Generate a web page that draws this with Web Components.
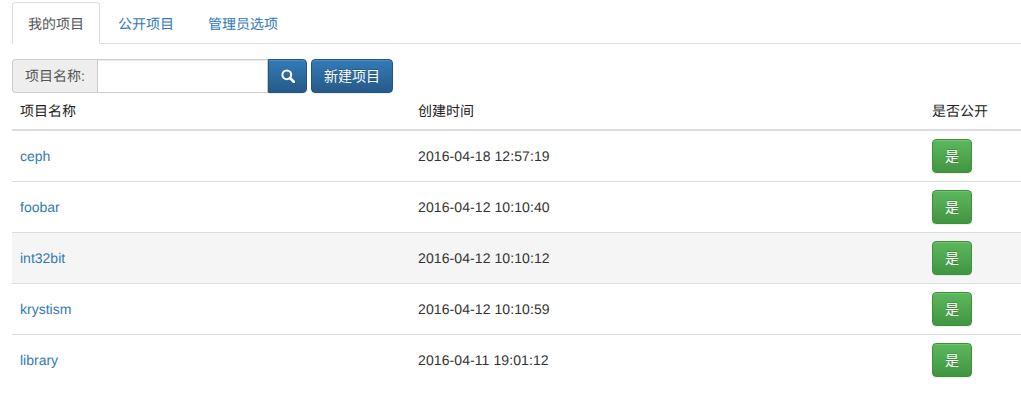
<!DOCTYPE html>
<html>
<head>
<meta charset="utf-8">
<title>项目</title>
<style>
  html, body { margin: 0; padding: 0; background: #fff; overflow: hidden; }
  body {
    padding: 2px 0 0 12px;
    font: 14px/20px "Liberation Sans", "Noto Sans CJK SC", sans-serif;
    color: #333;
    text-rendering: geometricPrecision;
  }
</style>
</head>
<body>
<project-tabs active="0" items="我的项目,公开项目,管理员选项"></project-tabs>
<search-bar label="项目名称:" action="新建项目"></search-bar>
<project-table>
  <project-row name="ceph" time="2016-04-18 12:57:19"></project-row>
  <project-row name="foobar" time="2016-04-12 10:10:40"></project-row>
  <project-row name="int32bit" time="2016-04-12 10:10:12" shaded></project-row>
  <project-row name="krystism" time="2016-04-12 10:10:59"></project-row>
  <project-row name="library" time="2016-04-11 19:01:12"></project-row>
</project-table>

<script>
class ProjectTabs extends HTMLElement {
  constructor() {
    super();
    this.attachShadow({ mode: 'open' });
  }

  connectedCallback() {
    const active = Number(this.getAttribute('active') || 0);
    const items = (this.getAttribute('items') || '').split(',');
    const tabs = items.map((item, i) =>
      `<a href="#" class="${i === active ? 'on' : ''}">${item}</a>`).join('');
    this.shadowRoot.innerHTML = `
      <style>
        :host { display: flex; height: 41px; border-bottom: 1px solid #ddd; }
        a {
          display: block;
          height: 41px;
          box-sizing: border-box;
          margin-right: 2px;
          padding: 11px 15px 9px;
          border: 1px solid transparent;
          border-radius: 4px 4px 0 0;
          color: #337ab7;
          text-decoration: none;
        }
        a.on {
          height: 42px;
          color: #555;
          background: #fff;
          border-color: #ddd #ddd #fff;
        }
      </style>
      ${tabs}
    `;
  }
}

class SearchBar extends HTMLElement {
  constructor() {
    super();
    this.attachShadow({ mode: 'open' });
  }

  connectedCallback() {
    const label = this.getAttribute('label') || '';
    const action = this.getAttribute('action') || '';
    this.shadowRoot.innerHTML = `
      <style>
        :host { display: flex; height: 34px; margin-top: 15px; }
        .addon {
          box-sizing: border-box;
          width: 85px;
          padding: 6px 12px;
          white-space: nowrap;
          color: #555;
          background: #eee;
          border: 1px solid #ccc;
          border-right: 0;
          border-radius: 4px 0 0 4px;
        }
        input {
          box-sizing: border-box;
          width: 171px;
          height: 34px;
          margin: 0;
          padding: 6px 12px;
          background: #fff;
          border: 1px solid #ccc;
          border-radius: 0;
          box-shadow: inset 0 1px 1px rgba(0,0,0,.075);
          outline: none;
        }
        button {
          box-sizing: border-box;
          height: 34px;
          margin: 0;
          padding: 6px 12px;
          color: #fff;
          font: inherit;
          text-shadow: 0 -1px 0 rgba(0,0,0,.2);
          background: linear-gradient(to bottom, #337ab7 0, #265a88 100%);
          border: 1px solid #245580;
          box-shadow: inset 0 1px 0 rgba(255,255,255,.15), 0 1px 1px rgba(0,0,0,.075);
        }
        .search {
          display: flex;
          align-items: center;
          justify-content: center;
          width: 39px;
          padding: 0;
          border-radius: 0 4px 4px 0;
        }
        .new { margin-left: 4px; width: 82px; padding: 6px 0; border-radius: 4px; }
        svg { display: block; }
      </style>
      <div class="addon">${label}</div>
      <input type="text">
      <button class="search" aria-label="search">
        <svg width="14" height="14" viewBox="0 0 14 14" fill="none" stroke="#fff">
          <circle cx="5.8" cy="5.8" r="4.4" stroke-width="2"></circle>
          <path d="M9 9l4 4" stroke-width="2.6" stroke-linecap="round"></path>
        </svg>
      </button>
      <button class="new">${action}</button>
    `;
  }
}

class ProjectTable extends HTMLElement {
  constructor() {
    super();
    this.attachShadow({ mode: 'open' });
    this.shadowRoot.innerHTML = `
      <style>
        :host { display: block; }
        .head {
          display: grid;
          grid-template-columns: 398px 514px 1fr;
          height: 38px;
          box-sizing: border-box;
          border-bottom: 2px solid #ddd;
          color: #222;
        }
        .head div { padding: 8px; }
      </style>
      <div class="head"><div>项目名称</div><div>创建时间</div><div>是否公开</div></div>
      <slot></slot>
    `;
  }
}

class ProjectRow extends HTMLElement {
  constructor() {
    super();
    this.attachShadow({ mode: 'open' });
  }

  connectedCallback() {
    const name = this.getAttribute('name') || '';
    const time = this.getAttribute('time') || '';
    this.shadowRoot.innerHTML = `
      <style>
        :host {
          display: grid;
          grid-template-columns: 398px 514px 1fr;
          align-items: center;
          height: 51px;
          box-sizing: border-box;
          border-top: 1px solid #ddd;
        }
        :host([shaded]) { background: #f5f5f5; }
        :host(:first-of-type) { border-top: 0; height: 50px; }
        div { padding: 0 8px; }
        .time { letter-spacing: .09px; }
        a { color: #337ab7; text-decoration: none; }
        button {
          display: block;
          box-sizing: border-box;
          width: 40px;
          height: 34px;
          padding: 0;
          color: #fff;
          font: inherit;
          text-shadow: 0 -1px 0 rgba(0,0,0,.2);
          background: linear-gradient(to bottom, #5cb85c 0, #419641 100%);
          border: 1px solid #3e8f3e;
          border-radius: 4px;
          box-shadow: inset 0 1px 0 rgba(255,255,255,.15), 0 1px 1px rgba(0,0,0,.075);
        }
      </style>
      <div><a href="#">${name}</a></div>
      <div class="time">${time}</div>
      <div><button>是</button></div>
    `;
  }
}

customElements.define('project-tabs', ProjectTabs);
customElements.define('search-bar', SearchBar);
customElements.define('project-table', ProjectTable);
customElements.define('project-row', ProjectRow);
</script>
</body>
</html>
